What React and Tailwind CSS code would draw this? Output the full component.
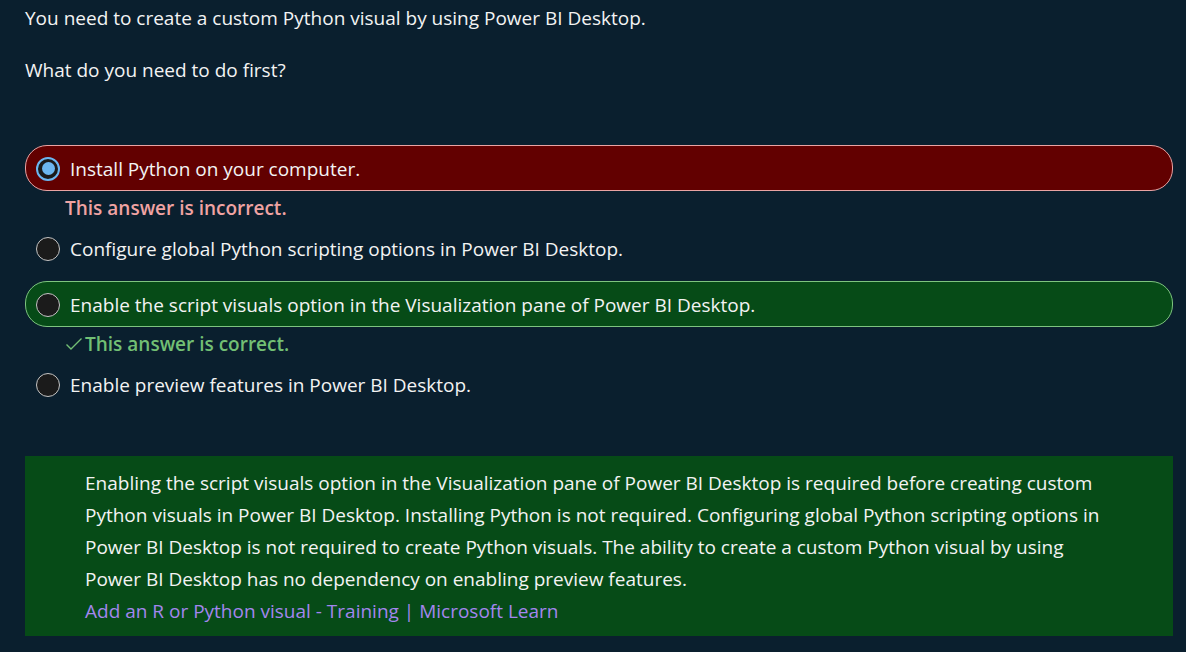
function Radio({ selected }) {
  return selected ? (
    <span className="flex h-6 w-6 shrink-0 items-center justify-center rounded-full border-2 border-[#6cb6f0] bg-[#1b1b1b]">
      <span className="h-[13px] w-[13px] rounded-full bg-[#6cb6f0]" />
    </span>
  ) : (
    <span className="h-6 w-6 shrink-0 rounded-full border border-[#c4c4c4] bg-[#1b1b1b]" />
  )
}

function Option({ text, state, selected }) {
  const box =
    state === 'wrong'
      ? 'bg-[#620000] border border-[#e9a3a3]'
      : state === 'right'
      ? 'bg-[#064b17] border border-[#7dc47f]'
      : 'border border-transparent'
  return (
    <div className={`flex h-[46px] items-center gap-[10px] rounded-[22px] pl-[10px] pt-[1px] ${box}`}>
      <Radio selected={selected} />
      <span>{text}</span>
    </div>
  )
}

export default function App() {
  return (
    <div
      className="min-h-[652px] bg-[#0a1f2e] pl-[25px] pr-[13px] pt-[5px] text-[19px] leading-[26px] text-[#f3f3f3]"
      style={{ fontFamily: '"Open Sans", "Noto Sans", sans-serif' }}
    >
      <p>You need to create a custom Python visual by using Power BI Desktop.</p>
      <p className="mt-[26px]">What do you need to do first?</p>

      <div className="mt-[62px]">
        <Option text="Install Python on your computer." state="wrong" selected />
        <div className="flex h-[34px] items-center pl-[40px] font-semibold text-[#f0a3a3]">
          This answer is incorrect.
        </div>
        <Option text="Configure global Python scripting options in Power BI Desktop." />
        <div className="h-[10px]" />
        <Option text="Enable the script visuals option in the Visualization pane of Power BI Desktop." state="right" />
        <div className="flex h-[34px] items-center pl-[40px] font-semibold text-[#72bf74]">
          <svg width="18" height="14" viewBox="0 0 18 14" className="mr-[2px]">
            <path d="M1.5 7.5 L6 12 L16.5 1.5" fill="none" stroke="#72bf74" strokeWidth="1.4" />
          </svg>
          This answer is correct.
        </div>
        <Option text="Enable preview features in Power BI Desktop." />
      </div>

      <div className="mt-[49px] bg-[#064b17] pb-[9px] pl-[60px] pr-[60px] pt-[11px] leading-[32px]">
        <p>
          Enabling the script visuals option in the Visualization pane of Power BI Desktop is required before creating custom
          Python visuals in Power BI Desktop. Installing Python is not required. Configuring global Python scripting options in
          Power BI Desktop is not required to create Python visuals. The ability to create a custom Python visual by using
          Power BI Desktop has no dependency on enabling preview features.
        </p>
        <a className="text-[#a386ee]">Add an R or Python visual - Training | Microsoft Learn</a>
      </div>
    </div>
  )
}
